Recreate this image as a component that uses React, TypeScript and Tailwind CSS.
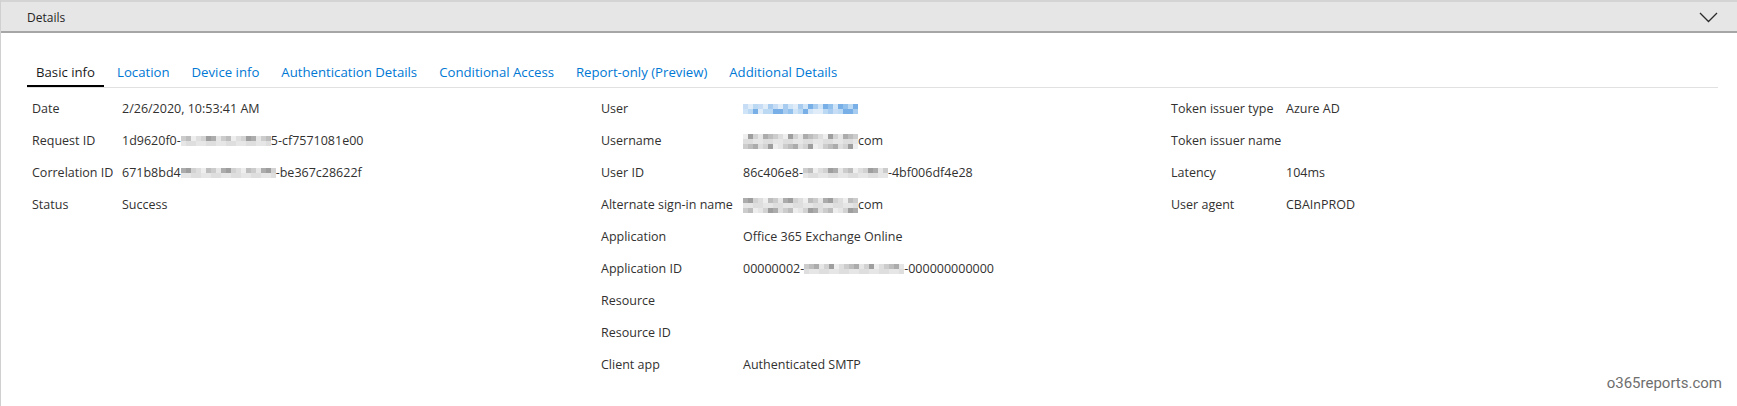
import React from 'react';

const grayShades = [
  'bg-[#eeeeee]',
  'bg-[#dedede]',
  'bg-[#cccccc]',
  'bg-[#bdbdbd]',
  'bg-[#acacac]',
  'bg-[#e6e6e6]',
  'bg-[#d2d2d2]',
  'bg-[#9e9e9e]',
];

const blueShades = [
  'bg-[#d0e4f7]',
  'bg-[#bcd9f4]',
  'bg-[#a8ccf0]',
  'bg-[#92c1ed]',
  'bg-[#e0edf9]',
  'bg-[#78afe6]',
  'bg-[#c6ddf5]',
];

// mosaic used where the source screenshot was blurred out
const Mosaic: React.FC<{ width: number; rows: number; seed: number; blue?: boolean }> = ({
  width,
  rows,
  seed,
  blue,
}) => {
  const shades = blue ? blueShades : grayShades;
  const cols = Math.round(width / 5);
  return (
    <span className="inline-flex flex-col align-middle">
      {Array.from({ length: rows }).map((_, r) => (
        <span key={r} className="flex">
          {Array.from({ length: cols }).map((_, c) => {
            const idx = ((c * 31 + r * 17 + seed * 11) ^ (c * r + seed)) % shades.length;
            return <span key={c} className={`block w-[5px] h-[5px] ${shades[idx]}`} />;
          })}
        </span>
      ))}
    </span>
  );
};

type Row = { label: string; value?: React.ReactNode };

const basic: Row[] = [
  { label: 'Date', value: '2/26/2020, 10:53:41 AM' },
  {
    label: 'Request ID',
    value: (
      <>
        1d9620f0-<Mosaic width={90} rows={2} seed={1} />5-cf7571081e00
      </>
    ),
  },
  {
    label: 'Correlation ID',
    value: (
      <>
        671b8bd4<Mosaic width={95} rows={2} seed={2} />-be367c28622f
      </>
    ),
  },
  { label: 'Status', value: 'Success' },
];

const user: Row[] = [
  { label: 'User', value: <Mosaic width={117} rows={2} seed={3} blue /> },
  {
    label: 'Username',
    value: (
      <>
        <Mosaic width={117} rows={3} seed={4} />com
      </>
    ),
  },
  {
    label: 'User ID',
    value: (
      <>
        86c406e8-<Mosaic width={85} rows={2} seed={5} />-4bf006df4e28
      </>
    ),
  },
  {
    label: 'Alternate sign-in name',
    value: (
      <>
        <Mosaic width={117} rows={3} seed={6} />com
      </>
    ),
  },
  { label: 'Application', value: 'Office 365 Exchange Online' },
  {
    label: 'Application ID',
    value: (
      <>
        00000002-<Mosaic width={100} rows={2} seed={7} />-000000000000
      </>
    ),
  },
  { label: 'Resource' },
  { label: 'Resource ID' },
  { label: 'Client app', value: 'Authenticated SMTP' },
];

const token: Row[] = [
  { label: 'Token issuer type', value: 'Azure AD' },
  { label: 'Token issuer name' },
  { label: 'Latency', value: '104ms' },
  { label: 'User agent', value: 'CBAInPROD' },
];

const tabs = [
  'Basic info',
  'Location',
  'Device info',
  'Authentication Details',
  'Conditional Access',
  'Report-only (Preview)',
  'Additional Details',
];

const FieldList: React.FC<{ rows: Row[]; labelWidth: string }> = ({ rows, labelWidth }) => (
  <div className="flex flex-col">
    {rows.map((row) => (
      <div key={row.label} className="flex items-center h-[32px]">
        <div className={`${labelWidth} shrink-0 text-[#323130]`}>{row.label}</div>
        <div className="flex items-center text-[#323130] whitespace-nowrap">{row.value}</div>
      </div>
    ))}
  </div>
);

export default function App() {
  return (
    <div
      className="relative w-[1737px] h-[406px] bg-white border-l border-[#d0d0d0] overflow-hidden"
      style={{ fontFamily: '"Open Sans", "Noto Sans", sans-serif' }}
    >
      {/* collapsible header */}
      <div className="flex items-center justify-between h-[33px] bg-[#e6e6e6] border-t-2 border-t-[#d4d4d4] border-b-2 border-b-[#a6a6a6] pl-[26px] pr-[19px]">
        <span className="text-[12px] text-[#252525] pt-[2px]">Details</span>
        <svg width="19" height="11" viewBox="0 0 19 11" className="mt-[2px]">
          <polyline points="1,1 9.5,9.5 18,1" fill="none" stroke="#2b2b2b" strokeWidth="1.3" />
        </svg>
      </div>

      <div className="pl-[26px] pr-[19px] pt-[30px]">
        {/* tab strip */}
        <div className="flex gap-[4px] border-b border-[#e1e1e1]">
          {tabs.map((t, i) => (
            <div
              key={t}
              className={
                i === 0
                  ? 'px-[9px] pb-[4px] border-b-2 border-black text-[13.2px] leading-[18px] text-[#1b1b1b]'
                  : 'px-[9px] pb-[4px] border-b-2 border-transparent text-[13.2px] leading-[18px] text-[#0078d4]'
              }
            >
              {t}
            </div>
          ))}
        </div>

        <div className="grid grid-cols-[569px_570px_1fr] pl-[5px] pt-[5px] text-[12.5px]">
          <FieldList rows={basic} labelWidth="w-[90px]" />
          <FieldList rows={user} labelWidth="w-[142px]" />
          <FieldList rows={token} labelWidth="w-[115px]" />
        </div>
      </div>

      <div
        className="absolute right-[15px] bottom-[14px] text-[15px] leading-[18px] text-[#6e6e6e]"
        style={{ fontFamily: 'Roboto, sans-serif' }}
      >
        o365reports.com
      </div>
    </div>
  );
}
